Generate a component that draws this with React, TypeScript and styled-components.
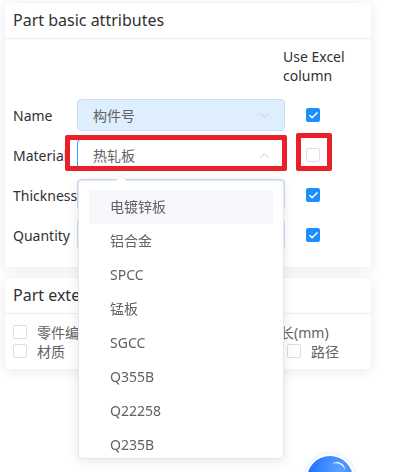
import React from 'react'
import styled, { createGlobalStyle } from 'styled-components'
import { ChevronDown, ChevronUp, Check } from 'lucide-react'

const GlobalStyle = createGlobalStyle`
  body {
    margin: 0;
    min-height: 472px;
    background: #fff;
    font-family: "Noto Sans", "Noto Sans CJK SC", sans-serif;
    color: #303133;
  }
`

const basicRows = [
  { label: 'Name', value: '构件号', checked: true },
  { label: 'Material', value: '热轧板', checked: false, open: true },
  { label: 'Thickness', value: '', checked: true },
  { label: 'Quantity', value: '', checked: true },
]

const materials = ['电镀锌板', '铝合金', 'SPCC', '锰板', 'SGCC', 'Q355B', 'Q22258', 'Q235B']

export default function App() {
  return (
    <Page>
      <GlobalStyle />
      <Card>
        <CardHeader>Part basic attributes</CardHeader>
        <AttrGrid>
          <span />
          <span />
          <ColumnTitle>
            Use Excel
            <br />
            column
          </ColumnTitle>
          {basicRows.map((row) => (
            <React.Fragment key={row.label}>
              <Label>{row.label}</Label>
              <SelectCell>
                <Select $open={row.open}>
                  <span>{row.value}</span>
                  {row.open ? <ChevronUp size={15} strokeWidth={1.5} /> : <ChevronDown size={15} strokeWidth={1.5} />}
                </Select>
                {row.open && (
                  <>
                    <Highlight $left={-12} $top={-4} $right={-2} $bottom={0} />
                    <Dropdown>
                      <Arrow />
                      <OptionList>
                        {materials.map((m, i) => (
                          <OptionItem key={m} $hover={i === 0}>
                            {m}
                          </OptionItem>
                        ))}
                      </OptionList>
                    </Dropdown>
                  </>
                )}
              </SelectCell>
              <CheckCell>
                <Box $checked={row.checked}>{row.checked && <Check size={11} strokeWidth={3} />}</Box>
                {!row.checked && <Highlight $left={11} $top={-6} $right={9} $bottom={0} />}
              </CheckCell>
            </React.Fragment>
          ))}
        </AttrGrid>
      </Card>

      <Card>
        <CardHeader>Part extended attributes</CardHeader>
        <ExtBody>
          <ExtRow>
            <ExtOption $width={110}>
              <Box />
              零件编号
            </ExtOption>
            <ExtOption $width={105}>
              <Box />
              零件名称
            </ExtOption>
            <ExtOption>
              <Box />
              零件长(mm)
            </ExtOption>
          </ExtRow>
          <ExtRow>
            <ExtOption $width={137}>
              <Box />
              材质
            </ExtOption>
            <ExtOption $width={137}>
              <Box />
              厚度
            </ExtOption>
            <ExtOption>
              <Box />
              路径
            </ExtOption>
          </ExtRow>
        </ExtBody>
      </Card>

      <FloatButton />
    </Page>
  )
}

const Page = styled.div`
  width: 366px;
  padding: 3px 22px 0 5px;
  display: flex;
  flex-direction: column;
  gap: 11px;
`

const Card = styled.div`
  background: #fff;
  border-radius: 4px;
  box-shadow: 0 2px 14px rgba(0, 0, 0, 0.09);
`

const CardHeader = styled.div`
  height: 35px;
  line-height: 35px;
  padding: 0 8px;
  font-size: 16px;
  color: #303133;
  border-bottom: 1px solid #ebeef5;
  white-space: nowrap;
`

const AttrGrid = styled.div`
  display: grid;
  grid-template-columns: 64px 208px 56px;
  grid-template-rows: 44px repeat(4, 32px);
  row-gap: 8px;
  padding: 8px 8px 16px;
`

const ColumnTitle = styled.div`
  font-size: 14px;
  line-height: 19px;
  margin-left: -2px;
  white-space: nowrap;
  color: #303133;
`

const Label = styled.div`
  font-size: 14px;
  display: flex;
  align-items: center;
  white-space: nowrap;
  color: #303133;
`

const SelectCell = styled.div`
  position: relative;
`

const Select = styled.div<{ $open?: boolean }>`
  box-sizing: border-box;
  height: 32px;
  display: flex;
  align-items: center;
  justify-content: space-between;
  padding: 0 12px 0 15px;
  border-radius: 4px;
  font-size: 14px;
  color: #606266;
  background: ${(p) => (p.$open ? '#fff' : '#dfeefc')};
  border: 1px solid ${(p) => (p.$open ? '#409eff' : '#c9dff5')};
  svg {
    color: #c0c4cc;
  }
`

const Highlight = styled.div<{ $left: number; $top: number; $right: number; $bottom: number }>`
  position: absolute;
  left: ${(p) => p.$left}px;
  top: ${(p) => p.$top}px;
  right: ${(p) => p.$right}px;
  bottom: ${(p) => p.$bottom}px;
  border: 5px solid #e8202a;
  border-radius: 2px;
  pointer-events: none;
  z-index: 5;
`

const Dropdown = styled.div`
  position: absolute;
  left: 1px;
  top: 41px;
  width: 206px;
  height: 279px;
  box-sizing: border-box;
  background: #fff;
  border: 1px solid #e4e7ed;
  border-radius: 4px;
  box-shadow: 0 2px 12px rgba(0, 0, 0, 0.1);
  z-index: 10;
`

const Arrow = styled.div`
  position: absolute;
  left: 36px;
  top: -6px;
  width: 0;
  height: 0;
  border-left: 6px solid transparent;
  border-right: 6px solid transparent;
  border-bottom: 6px solid #e4e7ed;
  &::after {
    content: '';
    position: absolute;
    left: -5px;
    top: 1px;
    border-left: 5px solid transparent;
    border-right: 5px solid transparent;
    border-bottom: 5px solid #fff;
  }
`

const OptionList = styled.div`
  height: 100%;
  overflow: hidden;
  padding: 9px 10px 0;
  box-sizing: border-box;
`

const OptionItem = styled.div<{ $hover?: boolean }>`
  height: 34px;
  line-height: 34px;
  padding: 0 21px;
  font-size: 14px;
  color: #606266;
  background: ${(p) => (p.$hover ? '#f5f7fa' : 'transparent')};
  white-space: nowrap;
`

const CheckCell = styled.div`
  position: relative;
  display: flex;
  align-items: center;
  justify-content: center;
`

const Box = styled.span<{ $checked?: boolean }>`
  box-sizing: border-box;
  width: 14px;
  height: 14px;
  flex: none;
  display: inline-flex;
  align-items: center;
  justify-content: center;
  border-radius: 2px;
  background: ${(p) => (p.$checked ? '#1e8fff' : '#fff')};
  border: 1px solid ${(p) => (p.$checked ? '#1e8fff' : '#dcdfe6')};
  color: #fff;
`

const ExtBody = styled.div`
  padding: 8px 8px 9px;
`

const ExtRow = styled.div`
  display: flex;
  height: 19px;
  align-items: center;
`

const ExtOption = styled.label<{ $width?: number }>`
  display: flex;
  align-items: center;
  gap: 10px;
  font-size: 14px;
  color: #606266;
  white-space: nowrap;
  width: ${(p) => (p.$width ? `${p.$width}px` : 'auto')};
`

const FloatButton = styled.div`
  position: fixed;
  left: 305px;
  top: 454px;
  width: 46px;
  height: 46px;
  border-radius: 50%;
  background: radial-gradient(circle at 70% 30%, #5aa2ff, #1f6fff 70%);
  border: 2px solid #fff;
  box-shadow: 0 0 4px rgba(64, 158, 255, 0.3);
  &::after {
    content: '';
    position: absolute;
    right: 8px;
    top: 6px;
    width: 14px;
    height: 10px;
    border-top: 2px solid rgba(255, 255, 255, 0.8);
    border-radius: 50%;
    transform: rotate(25deg);
  }
`
